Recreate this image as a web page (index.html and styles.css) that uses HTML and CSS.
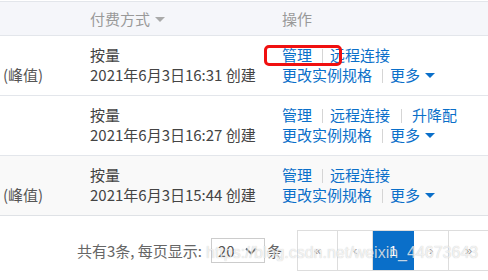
FILE: index.html
```html
<!DOCTYPE html>
<html lang="zh-CN">
<head>
    <meta charset="UTF-8">
    <title>实例列表</title>
    <link rel="stylesheet" href="styles.css">
</head>
<body>
    <div class="panel">
        <table class="list">
            <thead>
                <tr>
                    <th class="col-spec"></th>
                    <th class="col-pay">付费方式 <span class="caret gray"></span></th>
                    <th class="col-op">操作</th>
                </tr>
            </thead>
            <tbody>
                <tr>
                    <td class="spec">(峰值)</td>
                    <td>按量<br>2021年6月3日16:31 创建</td>
                    <td class="ops">
                        <a href="#">管理</a><span class="sep"></span><a href="#">远程连接</a><br>
                        <a href="#">更改实例规格</a><span class="sep"></span><a href="#">更多 <span class="caret"></span></a>
                    </td>
                </tr>
                <tr>
                    <td class="spec"></td>
                    <td>按量<br>2021年6月3日16:27 创建</td>
                    <td class="ops">
                        <a href="#">管理</a><span class="sep"></span><a href="#">远程连接</a><span class="sep wide"></span><a href="#">升降配</a><br>
                        <a href="#">更改实例规格</a><span class="sep"></span><a href="#">更多 <span class="caret"></span></a>
                    </td>
                </tr>
                <tr class="striped">
                    <td class="spec">(峰值)</td>
                    <td>按量<br>2021年6月3日15:44 创建</td>
                    <td class="ops">
                        <a href="#">管理</a><span class="sep"></span><a href="#">远程连接</a><br>
                        <a href="#">更改实例规格</a><span class="sep"></span><a href="#">更多 <span class="caret"></span></a>
                    </td>
                </tr>
            </tbody>
        </table>

        <div class="pager-bar">
            <span class="total">共有3条, 每页显示:</span>
            <span class="page-size">20 <svg width="14" height="10" viewBox="0 0 14 10"><path d="M2 2.5 L7 7.5 L12 2.5" fill="none" stroke="#777" stroke-width="1.8"/></svg></span>
            <span class="unit">条</span>
            <ul class="pager">
                <li class="w40">«</li>
                <li class="w35">‹</li>
                <li class="w41 active">1</li>
                <li class="w35">›</li>
                <li class="w40">»</li>
            </ul>
        </div>
    </div>

    <div class="mark"></div>
    <div class="watermark">https://blog.csdn.net/weixin_44673643</div>
</body>
</html>
```

FILE: styles.css
```css
body {
    margin: 0;
    background: #fff;
    font-family: "Noto Sans CJK SC", "Noto Sans", sans-serif;
    font-size: 15px;
    color: #444;
    width: 488px;
    height: 280px;
    overflow: hidden;
    position: relative;
}
.panel {
    padding-top: 1px;
}
.list {
    width: 488px;
    border-collapse: collapse;
    table-layout: fixed;
}
.list th {
    background: #f5f6fa;
    color: #999;
    font-weight: normal;
    text-align: left;
    height: 33px;
    padding: 0;
    border-top: 1px solid #e3e6eb;
    border-bottom: 1px solid #e3e6eb;
    line-height: 20px;
}
.col-spec { width: 90px; }
.col-pay { width: 192px; }
.list td {
    padding: 9px 0 10px;
    line-height: 20px;
    border-bottom: 1px solid #e3e6eb;
    vertical-align: middle;
    white-space: nowrap;
}
.list td.spec {
    padding-left: 3px;
    padding-top: 29px;
    padding-bottom: 0;
    vertical-align: top;
    color: #555;
}
.list tr.striped td {
    background: #f9f9f9;
    border-bottom-color: #dfe2e6;
}
.ops a {
    color: #0a6fc9;
    text-decoration: none;
}
.sep {
    display: inline-block;
    width: 1px;
    height: 14px;
    background: #d5d5d5;
    margin: 0 7px 0 10px;
    vertical-align: -2px;
}
.sep.wide {
    margin: 0 10px 0 11px;
}
.caret {
    display: inline-block;
    width: 0;
    height: 0;
    border-left: 5px solid transparent;
    border-right: 5px solid transparent;
    border-top: 5px solid #0a6fc9;
    margin-left: 2px;
    vertical-align: 3px;
}
.caret.gray {
    border-top-color: #aaa;
}
.pager-bar {
    display: flex;
    align-items: center;
    height: 39px;
    margin-top: 15px;
    padding-left: 77px;
    color: #666;
    white-space: nowrap;
}
.pager-bar > * {
    flex-shrink: 0;
}
.total {
    margin-right: 9px;
}
.page-size {
    display: flex;
    align-items: center;
    justify-content: space-between;
    box-sizing: border-box;
    width: 54px;
    height: 25px;
    border: 1px solid #ccc;
    padding: 0 6px 0 6px;
    color: #555;
}
.unit {
    margin-left: 2px;
    margin-right: 15px;
}
.pager {
    display: flex;
    list-style: none;
    margin: 0;
    padding: 0;
    height: 39px;
    border: 1px solid #ddd;
    border-right: none;
}
.pager li {
    display: flex;
    align-items: center;
    justify-content: center;
    border-right: 1px solid #ddd;
    color: #999;
    font-family: "Liberation Sans", sans-serif;
    font-size: 13px;
}
.pager .w40 { width: 39px; }
.pager .w35 { width: 34px; }
.pager .w41 { width: 40px; }
.pager li.active {
    background: #0a6fc9;
    color: #fff;
    font-size: 15px;
    border-color: #0a6fc9;
}
.mark {
    position: absolute;
    left: 264px;
    top: 45px;
    width: 72px;
    height: 15px;
    border: 3px solid #f01010;
    border-radius: 5px;
}
.watermark {
    position: absolute;
    left: 206px;
    top: 244px;
    font-family: "Liberation Sans", sans-serif;
    font-size: 16px;
    color: rgba(255, 255, 255, 0.75);
    text-shadow: 0 0 1px rgba(0, 0, 0, 0.25);
    white-space: nowrap;
}
```
